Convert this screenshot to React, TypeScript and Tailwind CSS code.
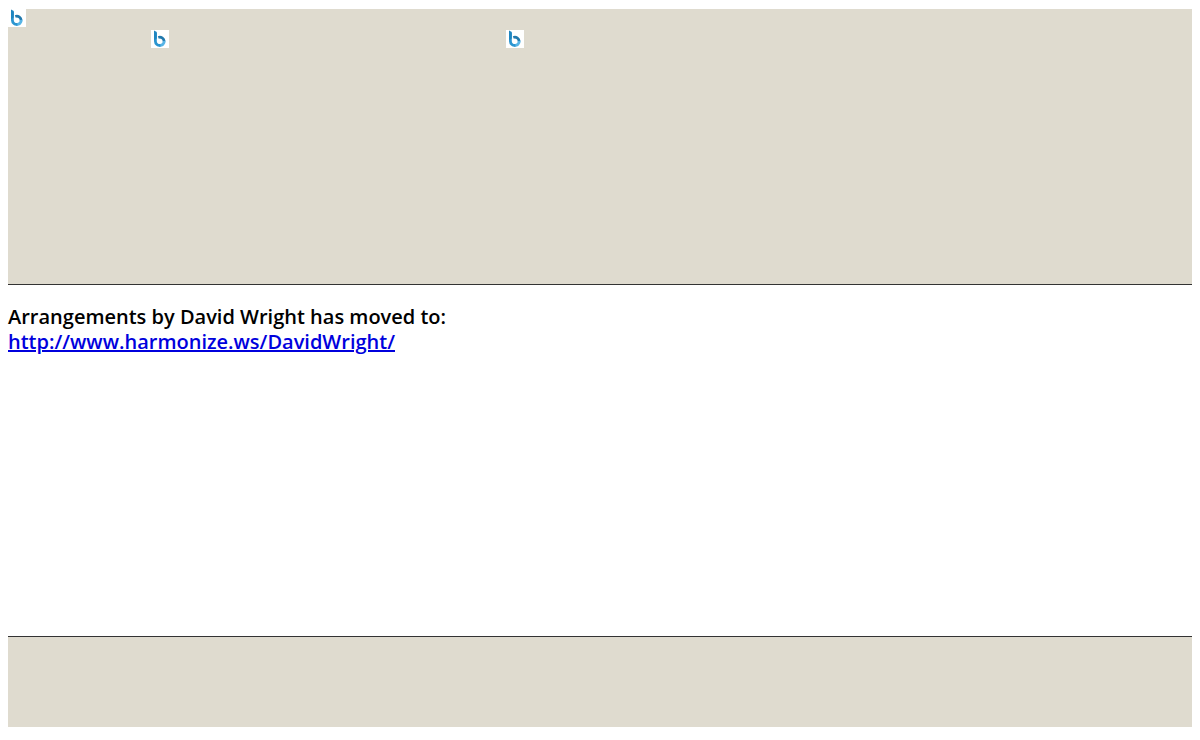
import React from 'react';

const newAddress = 'http://www.harmonize.ws/DavidWright/';

const Logo: React.FC = () => (
  <svg
    viewBox="0 0 18 18"
    className="block w-[18px] h-[18px] bg-white"
    role="img"
    aria-label="Logo"
  >
    <path
      d="M7.300 7.500a4.300 4.300 0 0 1 5.800 3.900"
      fill="none"
      stroke="#2179ad"
      strokeWidth="2.800"
    />
    <path
      d="M13.200 10.800a4.200 4.200 0 0 1-5 4.500"
      fill="none"
      stroke="#57b4e6"
      strokeWidth="2.900"
    />
    <path
      d="M4.400 3v8.200a4.300 4.300 0 0 0 5 4.200"
      fill="none"
      stroke="#2b95d0"
      strokeWidth="2.800"
    />
    <path d="M3 .5l2.800 1.400v6.600L3 10z" fill="#1f86c0" />
  </svg>
);

const Header: React.FC = () => (
  <header className="h-[276px] border-b border-[#333333] bg-[#dfdbcf]">
    <Logo />
    <div className="flex mt-[3px] ml-[143px]">
      <div className="w-[355px]">
        <Logo />
      </div>
      <Logo />
    </div>
  </header>
);

const App: React.FC = () => {
  return (
    <div className="px-2 pt-[9px] bg-white text-black font-['Open_Sans','Noto_Sans',sans-serif]">
      <Header />
      <main className="min-h-[351px] pt-[19px]">
        <h1 className="text-[20px] leading-[25px] font-semibold">
          Arrangements by David Wright has moved to:
          <br />
          <a href={newAddress} className="text-[#0000dd] underline">
            {newAddress}
          </a>
        </h1>
      </main>
      <footer className="h-[91px] border-t border-[#333333] bg-[#dfdbcf]" />
    </div>
  );
};

export default App;
